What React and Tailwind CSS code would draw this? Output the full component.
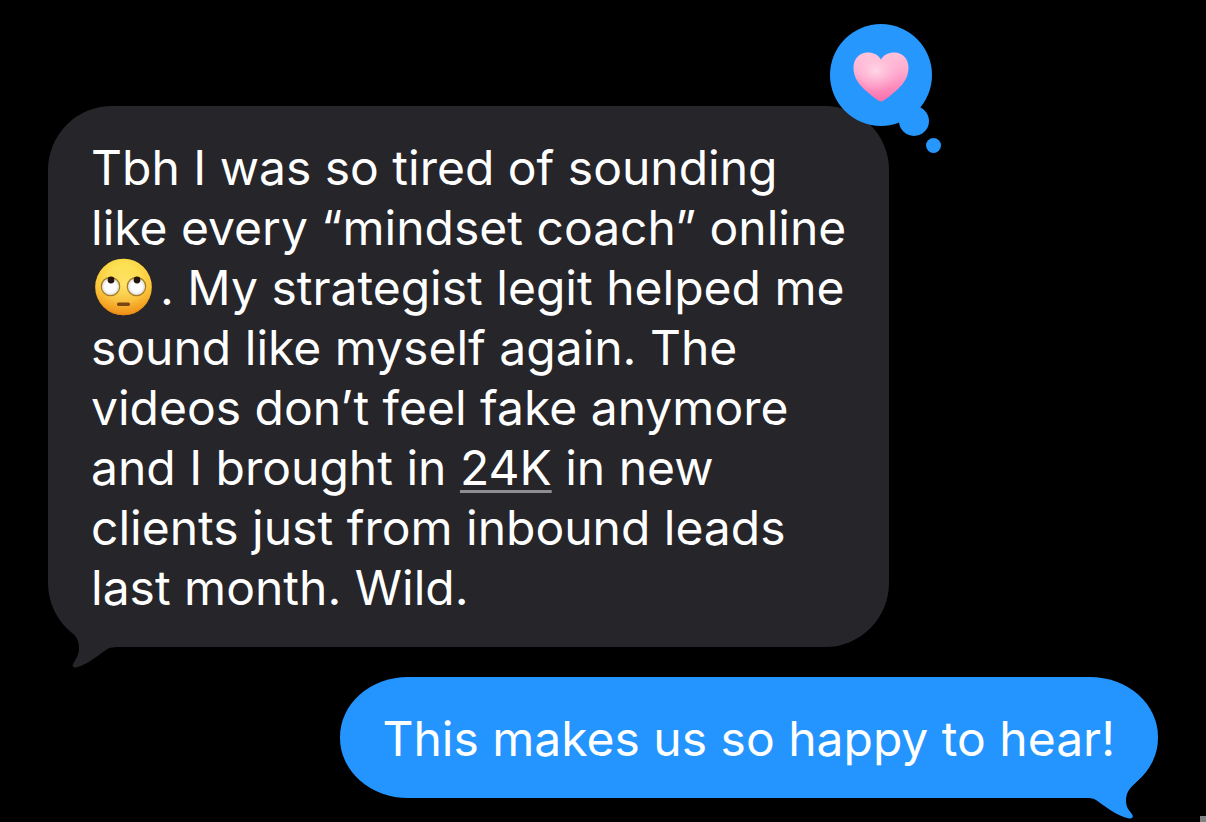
import React from 'react';

const EyeRollEmoji = () => (
  <svg
    viewBox="0 0 57 58"
    role="img"
    aria-label="Face with rolling eyes"
    className="inline-block w-[57px] h-[58px] ml-1 mr-2 mb-0.5 align-bottom"
  >
    <defs>
      <linearGradient id="face" x1="0" y1="0" x2="0" y2="1">
        <stop offset="0" stopColor="#fbe04a" />
        <stop offset="0.5" stopColor="#fcc93c" />
        <stop offset="1" stopColor="#f0921a" />
      </linearGradient>
      <radialGradient id="faceEdge" cx="0.5" cy="0.44" r="0.57">
        <stop offset="0" stopColor="#fff48a" stopOpacity="0.55" />
        <stop offset="0.6" stopColor="#fff27a" stopOpacity="0.25" />
        <stop offset="0.85" stopColor="#f5a623" stopOpacity="0.1" />
        <stop offset="1" stopColor="#d9780c" stopOpacity="0.65" />
      </radialGradient>
      <radialGradient id="eye">
        <stop offset="0.6" stopColor="#ffffff" />
        <stop offset="1" stopColor="#d3d6cf" />
      </radialGradient>
    </defs>
    <circle cx="28.5" cy="29" r="28.3" fill="url(#face)" />
    <circle cx="28.5" cy="29" r="28.3" fill="url(#faceEdge)" />
    <circle cx="15.5" cy="28.5" r="9.2" fill="url(#eye)" stroke="#a77a22" strokeWidth="1.2" />
    <circle cx="41.5" cy="28.5" r="9.2" fill="url(#eye)" stroke="#a77a22" strokeWidth="1.2" />
    <circle cx="16" cy="22" r="3.4" fill="#24160d" />
    <circle cx="42" cy="22" r="3.4" fill="#24160d" />
    <rect x="22" y="44.5" width="13" height="3.4" rx="1.6" fill="#7b4312" />
  </svg>
);

const HeartReaction = () => (
  <svg
    viewBox="0 0 116 132"
    role="img"
    aria-label="Loved"
    className="absolute -top-[84px] -right-[53px] w-[116px] h-[132px]"
  >
    <defs>
      <linearGradient id="heart" x1="0" y1="0" x2="0.1" y2="1">
        <stop offset="0" stopColor="#ffc6dc" />
        <stop offset="0.45" stopColor="#ffabcf" />
        <stop offset="1" stopColor="#fb74b0" />
      </linearGradient>
      <radialGradient id="heartShine" cx="0.4" cy="0.38" r="0.5">
        <stop offset="0" stopColor="#ffe0ea" stopOpacity="0.8" />
        <stop offset="1" stopColor="#ffc0da" stopOpacity="0" />
      </radialGradient>
    </defs>
    <g fill="#2698fd">
      <circle cx="55" cy="53" r="51" />
      <circle cx="88" cy="99" r="15" />
      <circle cx="107.5" cy="123.5" r="7.5" />
    </g>
    <path
      d="M55 79.5C51 78.5 45 73 38.5 67.5C31 60.5 27.500 53.500 27.500 45.500C27.500 37 33.5 30.500 41.5 30.500C47.5 30.500 52.5 33 55 37.5C57.5 33 62.5 30.500 68.5 30.500C76.500 30.500 82.500 37 82.500 45.500C82.500 53.500 79 60.500 71.500 67.500C65 73 59 78.5 55 79.5Z"
      fill="url(#heart)"
    />
    <path
      d="M55 76C49 72 30 58 30 45.5C30 38 35 32 41.5 32C47.5 32 52.5 35 55 40C57.5 35 62.5 32 68.5 32C75 32 80 38 80 45.5C80 58 61 72 55 76Z"
      fill="url(#heartShine)"
    />
  </svg>
);

const ReceivedMessage = () => (
  <div className="relative w-fit self-start rounded-[64px] bg-[#26252a] pt-8 pb-[29px] px-[43px] text-white">
    <p className="whitespace-nowrap">
      Tbh I was so tired of sounding
      <br />
      like every “mindset coach” online
      <br />
      <EyeRollEmoji />. My strategist legit helped me
      <br />
      sound like myself again. The
      <br />
      videos don’t feel fake anymore
      <br />
      and I brought in{' '}
      <a
        href="#amount"
        className="underline decoration-[#8e8d92] decoration-[3px] underline-offset-[5px]"
      >
        24K
      </a>{' '}
      in new
      <br />
      clients just from inbound leads
      <br />
      last month. Wild.
    </p>
    <svg viewBox="0 0 60 50" className="absolute -bottom-[21px] left-[16px] w-[60px] h-[50px] fill-[#26252a]">
      <path d="M4 10C9 16 15 19 15 30C15 38 11 42 9 46C8 48.5 9.5 50 12 49.5C23 47 33 38 42 32C46 29 50 29 58 29V0H4Z" />
    </svg>
    <HeartReaction />
  </div>
);

const SentMessage = () => (
  <div className="relative w-fit self-end rounded-[68px/60px] bg-[#2495ff] pt-8 pb-[29px] pl-[42px] pr-[43px] text-white">
    <p className="whitespace-nowrap">This makes us so happy to hear!</p>
    <svg viewBox="0 0 60 50" className="absolute -bottom-[21px] right-[14px] w-[60px] h-[50px] fill-[#2495ff]">
      <path d="M54 11C48 18 42 21 42 32C42 39 46 42 48.5 46C49.5 48.5 48 50 45 49.5C33 47 22 38 12 31C8 29 6 29 0 29V0H54Z" />
    </svg>
  </div>
);

export default function App() {
  return (
    <main className="relative flex min-h-screen flex-col gap-[30px] overflow-hidden bg-black pt-[106px] px-12 font-['Inter',sans-serif] text-[48px] leading-[60px]">
      <ReceivedMessage />
      <SentMessage />
      <span className="absolute bottom-0 right-0 size-[6px] bg-[#808080]" />
    </main>
  );
}
